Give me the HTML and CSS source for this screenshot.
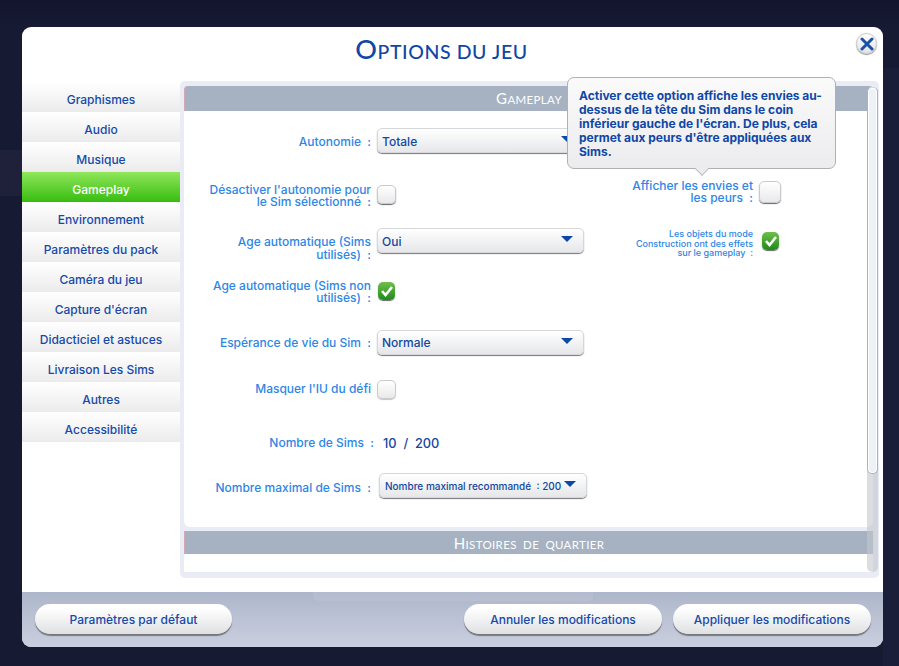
FILE: index.html
```html
<!DOCTYPE html>
<html lang="fr">
<head>
<meta charset="utf-8">
<title>Options du jeu</title>
<link rel="stylesheet" href="styles.css">
</head>
<body>
<div class="dialog">
  <header class="head">
    <h1 class="title">Options du jeu</h1>
    <button class="close" aria-label="Fermer">
      <svg width="14" height="14" viewBox="0 0 14 14"><path d="M2 2 L12 12 M12 2 L2 12" fill="none" stroke="#1c4fa8" stroke-width="3" stroke-linecap="round"/></svg>
    </button>
  </header>
  <div class="main">
    <nav class="nav">
      <a class="nav-item">Graphismes</a>
      <a class="nav-item">Audio</a>
      <a class="nav-item">Musique</a>
      <a class="nav-item active">Gameplay</a>
      <a class="nav-item">Environnement</a>
      <a class="nav-item">Paramètres du pack</a>
      <a class="nav-item">Caméra du jeu</a>
      <a class="nav-item">Capture d'écran</a>
      <a class="nav-item">Didacticiel et astuces</a>
      <a class="nav-item">Livraison Les Sims</a>
      <a class="nav-item">Autres</a>
      <a class="nav-item">Accessibilité</a>
    </nav>
    <section class="panel">
      <div class="inner">
        <h2 class="sec-head">Gameplay</h2>
        <div class="sec-body">
          <div class="col-left">
            <div class="row r1"><span class="lbl">Autonomie&nbsp; :</span><div class="select"><span>Totale</span><i class="arrow"></i></div></div>
            <div class="row r2"><span class="lbl">Désactiver l'autonomie pour<br>le Sim sélectionné&nbsp; :</span><i class="check"></i></div>
            <div class="row r3"><span class="lbl">Age automatique (Sims<br>utilisés)&nbsp; :</span><div class="select"><span>Oui</span><i class="arrow"></i></div></div>
            <div class="row r4"><span class="lbl">Age automatique (Sims non<br>utilisés)&nbsp; :</span><i class="check on"><svg width="14" height="12" viewBox="0 0 14 12"><path d="M2 6 L5.5 10 L12 2" fill="none" stroke="#fff" stroke-width="2.6"/></svg></i></div>
            <div class="row r5"><span class="lbl">Espérance de vie du Sim&nbsp; :</span><div class="select"><span>Normale</span><i class="arrow"></i></div></div>
            <div class="row r6"><span class="lbl">Masquer l'IU du défi</span><i class="check flat"></i></div>
            <div class="row r7"><span class="lbl wide">Nombre de Sims&nbsp; :</span><span class="value">10&nbsp; /&nbsp; 200</span></div>
            <div class="row r8"><span class="lbl wide">Nombre maximal de Sims&nbsp; :</span><div class="select small"><span>Nombre maximal recommandé&nbsp; : 200</span><i class="arrow"></i></div></div>
          </div>
          <div class="col-right">
            <div class="row q1"><span class="lbl">Afficher les envies et<br>les peurs&nbsp; :</span><i class="check big"></i></div>
            <div class="row q2"><span class="lbl tiny">Les objets du mode<br>Construction ont des effets<br>sur le gameplay&nbsp; :</span><i class="check on"><svg width="14" height="12" viewBox="0 0 14 12"><path d="M2 6 L5.5 10 L12 2" fill="none" stroke="#fff" stroke-width="2.6"/></svg></i></div>
          </div>
        </div>
        <h2 class="sec-head second">Histoires de quartier</h2>
        <div class="sec-rest"></div>
      </div>
      <div class="scroll"><div class="thumb"></div></div>
    </section>
  </div>
  <footer class="foot">
    <button class="btn">Paramètres par défaut</button>
    <div class="foot-right">
      <button class="btn">Annuler les modifications</button>
      <button class="btn">Appliquer les modifications</button>
    </div>
  </footer>
  <div class="tip">Activer cette option affiche les envies au-<br>dessus de la tête du Sim dans le coin<br>inférieur gauche de l'écran. De plus, cela<br>permet aux peurs d'être appliquées aux<br>Sims.</div>
</div>
</body>
</html>
```
FILE: styles.css
```css
* { box-sizing: border-box; }
html, body { margin: 0; height: 100%; }
body {
  background:
    linear-gradient(#1e2139, #1e2139) 0 150px / 22px 46px no-repeat,
    linear-gradient(#1a1e38, #1a1e38) 883px 68px / 16px 598px no-repeat,
    linear-gradient(#12152c, #161a33 27px) 0 0 / 100% 27px no-repeat,
    #161a33;
  font-family: Inter, "Liberation Sans", sans-serif;
  font-size: 12px;
  font-weight: 500;
  overflow: hidden;
  padding: 27px 16px 19px 22px;
}
.dialog {
  position: relative;
  width: 861px;
  height: 620px;
  background: #fff;
  border-radius: 9px;
  display: flex;
  flex-direction: column;
  overflow: visible;
}
.head { height: 54px; position: relative; flex: none; }
.title {
  margin: 0;
  padding-top: 8px;
  padding-right: 22px;
  text-align: center;
  font: 500 19.5px/28px Lato, sans-serif;
  color: #0e47a5;
  text-transform: uppercase;
  letter-spacing: .6px;
}
.title::first-letter { font-size: 27px; }
.close {
  position: absolute;
  left: 834px;
  top: 6px;
  width: 21px;
  height: 21px;
  padding: 0;
  border: 1px solid #c4c7cc;
  border-radius: 50%;
  background: linear-gradient(#fff, #e2e3e6);
  box-shadow: 0 1px 1px #8e9096;
  display: flex;
  align-items: center;
  justify-content: center;
}
.main { flex: 1; display: flex; min-height: 0; }
.nav { width: 158px; flex: none; padding-top: 1px; }
.nav-item {
  display: flex;
  align-items: center;
  justify-content: center;
  height: 30px;
  padding-top: 5px;
  color: #1549a9;
  background: linear-gradient(#fff, #ebebec);
}
.nav-item.active {
  background: linear-gradient(#90e65b, #37bd0f);
  color: #fff;
}
.panel {
  position: relative;
  width: 699px;
  height: 497px;
  background: #e9ecf4;
  border-radius: 5px;
  padding: 5px 6px 6px 4px;
}
.inner { height: 486px; display: flex; flex-direction: column; }
.sec-head {
  margin: 0;
  flex: none;
  height: 25px;
  background: #a6b1c1;
  border-left: 1px solid #d5a9b3;
  border-radius: 4px 4px 0 0;
  text-align: center;
  color: #fff;
  text-transform: uppercase;
  font: 400 11.5px/25px Lato, sans-serif;
  letter-spacing: .35px;
  word-spacing: 3px;
}
.sec-head::first-letter { font-size: 15px; }
.sec-head.second { height: 23px; line-height: 24px; border-radius: 0; margin-top: 4px; }
.sec-body {
  height: 416px;
  background: #fff;
  border-radius: 0 0 6px 6px;
  display: flex;
  flex: none;
}
.sec-rest { flex: 1; background: #fff; }
.col-left { width: 410px; padding-top: 17px; flex: none; }
.col-right { padding-top: 68px; width: 197px; flex: none; margin-left: -10px; }
.row { display: flex; align-items: center; justify-content: flex-end; }
.lbl {
  color: #2d86e6;
  text-align: right;
  line-height: 12.5px;
}
.col-left .row { width: 398px; justify-content: flex-start; }
.col-left .lbl { width: 187px; margin-right: 6px; flex: none; }
.col-left .lbl.wide { width: 190px; margin-right: 9px; }
.select {
  width: 207px;
  height: 25px;
  flex: none;
  border: 1px solid #d6d7da;
  border-radius: 5px;
  background: linear-gradient(#fff, #e6e7e9);
  box-shadow: 0 1px 1px #77787c;
  color: #15479f;
  display: flex;
  align-items: center;
  justify-content: space-between;
  padding: 1px 10px 0 4px;
}
.r5 .select { padding-top: 0; }
.select.small { width: 208px; font-size: 10px; padding: 0 10px 0 5px; }
.arrow {
  width: 0;
  height: 0;
  border-left: 6px solid transparent;
  border-right: 6px solid transparent;
  border-top: 6px solid #0d47a8;
  margin-top: -4px;
}
.check {
  width: 19px;
  height: 19px;
  flex: none;
  border: 1px solid #c9cacd;
  border-radius: 5px;
  background: linear-gradient(#fff, #e9e9eb);
  box-shadow: 0 1px 1px #68696c;
  display: flex;
  align-items: center;
  justify-content: center;
}
.check.flat { box-shadow: 0 1px 1px #c5c5c8; }
.check.big { width: 22px; height: 22px; }
.check.on {
  width: 17px;
  height: 18px;
  margin-left: 1px;
  border: 0;
  background: linear-gradient(#6fc04a, #1f8a1a);
}
.value { color: #15479f; font-size: 12.8px; }
.r1 { height: 25px; }
.r1 .lbl { padding-top: 4px; }
.r2 { height: 26px; margin-top: 28px; }
.r2 .lbl { padding-top: 4px; }
.r3 { height: 34px; margin-top: 21px; align-items: flex-start; }
.r3 .lbl { padding-top: 8px; }
.r4 { height: 26px; margin-top: 17px; }
.r4 .check { margin-bottom: 2px; }
.r5 { height: 25px; margin-top: 25px; }
.r5 .lbl { padding-top: 2px; }
.r6 { height: 20px; margin-top: 24px; }
.r7 { height: 20px; margin-top: 34px; }
.r8 { height: 25px; margin-top: 20px; }
.col-left .r8 .lbl { width: 187px; margin-right: 8px; padding-top: 6px; }
.q1 { height: 26px; }
.q2 { height: 30px; margin-top: 21px; }
.q1 .lbl { margin-right: 6px; }
.q2 .lbl { margin-right: 8px; padding-top: 5px; }
.q2 .check { margin-right: 2px; }
.col-right .row { width: 100%; }
.lbl.tiny { font-size: 9px; line-height: 9.5px; }
.scroll {
  position: absolute;
  left: 687px;
  top: 6px;
  width: 11px;
  height: 485px;
  background: rgba(195, 199, 205, .6);
  border-radius: 5px;
}
.thumb {
  height: 387px;
  background: #edf2f7;
  border: 1px solid #aeb2b8;
  border-top-color: #d5d7da;
  border-radius: 5px;
  box-shadow: inset 0 0 0 1px #fff;
}
.foot {
  position: relative;
  height: 55px;
  flex: none;
  margin-top: 14px;
  border-radius: 0 0 9px 9px;
  background: linear-gradient(#adb6ca, #cacfde);
  display: flex;
  justify-content: space-between;
  padding: 12px 12px 0 13px;
}
.foot::before {
  content: "";
  position: absolute;
  left: 291px;
  top: 0;
  width: 280px;
  height: 9px;
  background: rgba(255, 255, 255, .08);
  border-radius: 0 0 5px 5px;
}
.foot-right { display: flex; gap: 11px; }
.foot-right .btn { width: 198px; }
.btn {
  position: relative;
  width: 197px;
  height: 30px;
  border: 0;
  border-radius: 15px;
  background: linear-gradient(#fff 15%, #dfe0e2);
  box-shadow: 0 2px 1px #77787e;
  color: #1549a9;
  font: 500 12px Inter, "Liberation Sans", sans-serif;
  padding: 0;
}
.tip {
  position: absolute;
  left: 545px;
  top: 50px;
  width: 269px;
  height: 92px;
  padding: 11px 10px 0 11px;
  background: linear-gradient(#fafafb, #ececee);
  border: 1px solid #aeb0b4;
  border-radius: 7px;
  color: #0f47a6;
  font-weight: 700;
  line-height: 14px;
  white-space: nowrap;
}
.tip::after {
  content: "";
  position: absolute;
  left: 128px;
  top: 85px;
  width: 11px;
  height: 11px;
  background: #ececee;
  border-right: 1px solid #aeb0b4;
  border-bottom: 1px solid #aeb0b4;
  transform: rotate(45deg) scale(.8);
}
```
